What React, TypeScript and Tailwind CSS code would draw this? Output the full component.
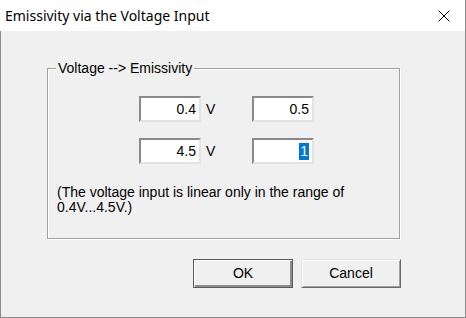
import React from 'react';

const sysFont = { fontFamily: '"Liberation Sans", Arial, sans-serif' };

const Field: React.FC<{ value: string; selected?: boolean }> = ({ value, selected }) => (
  <div className="flex h-[26px] w-[62px] items-center justify-end border-2 border-t-[#8a8a8a] border-l-[#8a8a8a] border-r-[#e3e3e3] border-b-[#e3e3e3] bg-white pr-[3px] text-[14px] text-black">
    {selected ? <span className="bg-[#0078d7] px-px leading-[17px] text-white">{value}</span> : <span>{value}</span>}
  </div>
);

const Button: React.FC<{ label: string; primary?: boolean }> = ({ label, primary }) => (
  <button
    className={
      'h-[29px] w-[100px] bg-[#f0f0f0] text-[14px] text-black ' +
      (primary
        ? 'border border-[#5a5a5a] shadow-[inset_1px_1px_0_#ffffff,inset_-2px_-2px_0_#8c8c8c]'
        : 'border border-t-[#e3e3e3] border-l-[#e3e3e3] border-r-[#696969] border-b-[#696969] shadow-[inset_1px_1px_0_#ffffff,inset_-1px_-1px_0_#a0a0a0]')
    }
    style={sysFont}
  >
    {label}
  </button>
);

export default function App() {
  return (
    <div className="flex h-[318px] w-[466px] flex-col overflow-hidden bg-white">
      {/* title bar */}
      <div className="flex h-[31px] shrink-0 items-center justify-between border-r border-[#8a8a8a] bg-white pl-[5px] pr-[15px]">
        <span className="text-[14px] text-black" style={{ fontFamily: '"Noto Sans", "Open Sans", sans-serif' }}>
          Emissivity via the Voltage Input
        </span>
        <svg width="12" height="12" viewBox="0 0 12 12" className="mt-px">
          <path d="M0.5 0.5 L11.5 11.5 M11.5 0.5 L0.5 11.5" stroke="#000" strokeWidth="1" fill="none" />
        </svg>
      </div>

      {/* body */}
      <div className="flex flex-1 flex-col border-x border-b border-[#8a8a8a] bg-[#f0f0f0] pl-[46px] pt-[37px]" style={sysFont}>
        <div className="relative h-[171px] w-[353px] border border-[#a0a0a0] shadow-[1px_1px_0_#ffffff,inset_1px_1px_0_#ffffff]">
          <span className="absolute left-[8px] top-[-9px] bg-[#f0f0f0] px-[2px] text-[14px] leading-[16px] text-black">
            Voltage --&gt; Emissivity
          </span>
          <div className="flex flex-col gap-[16px] pl-[91px] pt-[27px]">
            <div className="flex items-center">
              <Field value="0.4" />
              <span className="w-[51px] pl-[5px] text-[14px] text-black">V</span>
              <Field value="0.5" />
            </div>
            <div className="flex items-center">
              <Field value="4.5" />
              <span className="w-[51px] pl-[5px] text-[14px] text-black">V</span>
              <Field value="1" selected />
            </div>
          </div>
          <p className="mt-[21px] pl-[9px] text-[14px] leading-[15px] text-black">
            (The voltage input is linear only in the range of
            <br />
            0.4V...4.5V.)
          </p>
        </div>
        <div className="mt-[20px] flex w-[354px] justify-end gap-[8px]">
          <Button label="OK" primary />
          <Button label="Cancel" />
        </div>
      </div>
    </div>
  );
}
